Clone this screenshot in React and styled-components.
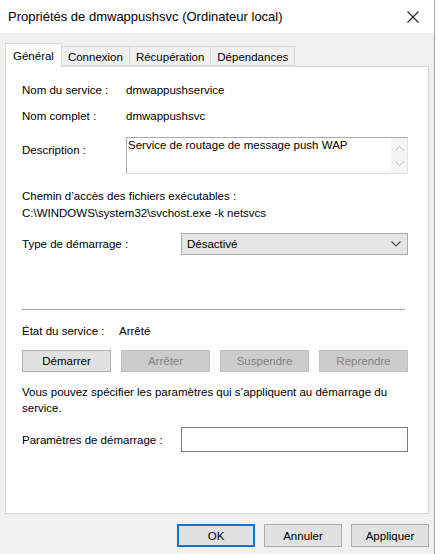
import React from 'react'
import styled, { createGlobalStyle } from 'styled-components'

const GlobalStyle = createGlobalStyle`
  html, body {
    margin: 0;
    padding: 0;
    background: #fff;
  }
  body {
    font-family: "Liberation Sans", Arial, sans-serif;
    font-size: 11.5px;
    color: #000;
  }
`

const tabs = ['Général', 'Connexion', 'Récupération', 'Dépendances']
const actions = [
  { label: 'Démarrer', enabled: true },
  { label: 'Arrêter', enabled: false },
  { label: 'Suspendre', enabled: false },
  { label: 'Reprendre', enabled: false },
]

const App = () => {
  return (
    <>
      <GlobalStyle />
      <Window>
        <TitleBar>
          <Title>Propriétés de dmwappushsvc (Ordinateur local)</Title>
          <CloseButton>
            <svg width="12" height="12" viewBox="0 0 12 12">
              <path d="M0.5 0.5 L11.5 11.5 M11.5 0.5 L0.5 11.5" stroke="#222" strokeWidth="1.1" fill="none" />
            </svg>
          </CloseButton>
        </TitleBar>
        <Body>
          <TabStrip>
            {tabs.map((t, i) => (
              <Tab key={t} active={i === 0}>{t}</Tab>
            ))}
          </TabStrip>
          <Panel>
            <InfoRow top={15}>
              <Label>Nom du service :</Label>
              <Value>dmwappushservice</Value>
            </InfoRow>
            <InfoRow top={10}>
              <Label>Nom complet :</Label>
              <Value>dmwappushsvc</Value>
            </InfoRow>
            <DescRow>
              <Label>Description :</Label>
              <DescBox>
                <DescText>Service de routage de message push WAP</DescText>
                <ScrollTrack>
                  <svg width="9" height="5" viewBox="0 0 9 5">
                    <path d="M0.5 4.5 L4.5 0.5 L8.5 4.5" stroke="#c2c2c2" strokeWidth="1" fill="none" />
                  </svg>
                  <svg width="9" height="5" viewBox="0 0 9 5">
                    <path d="M0.5 0.5 L4.5 4.5 L8.5 0.5" stroke="#c2c2c2" strokeWidth="1" fill="none" />
                  </svg>
                </ScrollTrack>
              </DescBox>
            </DescRow>
            <PathBlock>
              <div>Chemin d’accès des fichiers exécutables :</div>
              <div>C:\WINDOWS\system32\svchost.exe -k netsvcs</div>
            </PathBlock>
            <FieldRow top={11}>
              <FieldLabel>Type de démarrage :</FieldLabel>
              <Select>
                <span>Désactivé</span>
                <svg width="10" height="6" viewBox="0 0 10 6">
                  <path d="M0.5 0.5 L5 5 L9.5 0.5" stroke="#444" strokeWidth="1.1" fill="none" />
                </svg>
              </Select>
            </FieldRow>
            <Separator />
            <InfoRow top={12}>
              <StateLabel>État du service :</StateLabel>
              <span>Arrêté</span>
            </InfoRow>
            <ActionGrid>
              {actions.map(a => (
                <ActionButton key={a.label} disabled={!a.enabled}>{a.label}</ActionButton>
              ))}
            </ActionGrid>
            <Note>
              Vous pouvez spécifier les paramètres qui s’appliquent au démarrage du<br />service.
            </Note>
            <FieldRow top={11}>
              <FieldLabel>Paramètres de démarrage :</FieldLabel>
              <TextInput />
            </FieldRow>
          </Panel>
          <Footer>
            <DialogButton primary>OK</DialogButton>
            <DialogButton>Annuler</DialogButton>
            <DialogButton>Appliquer</DialogButton>
          </Footer>
        </Body>
      </Window>
    </>
  )
}

export default App

const Window = styled.div`
  width: 434px;
  height: 554px;
  border-right: 1px solid #a9a9a9;
  background: #f0f0f0;
  display: flex;
  flex-direction: column;
  overflow: hidden;
`

const TitleBar = styled.div`
  height: 33px;
  background: #fff;
  display: flex;
  align-items: center;
  justify-content: space-between;
  padding: 0 8px;
  flex-shrink: 0;
`

const Title = styled.div`
  font-size: 13px;
  color: #000;
`

const CloseButton = styled.div`
  width: 12px;
  height: 12px;
  margin-right: 7px;
  display: flex;
`

const Body = styled.div`
  flex: 1;
  padding: 9px 5px 0 5px;
  display: flex;
  flex-direction: column;
`

const TabStrip = styled.div`
  display: flex;
  align-items: flex-end;
  height: 24px;
  position: relative;
  z-index: 1;
`

const Tab = styled.div`
  box-sizing: border-box;
  height: ${p => (p.active ? '24px' : '20px')};
  padding: 0 ${p => (p.active ? '7px' : '6px')};
  margin-bottom: ${p => (p.active ? '-1px' : '0')};
  border: 1px solid #d9d9d9;
  border-bottom: ${p => (p.active ? 'none' : '1px solid #d9d9d9')};
  border-left: ${p => (p.active ? '1px solid #d9d9d9' : 'none')};
  background: ${p => (p.active ? '#fff' : '#f0f0f0')};
  display: flex;
  align-items: center;
  padding-top: ${p => (p.active ? '0' : '1px')};
  line-height: 16px;
  white-space: nowrap;
`

const Panel = styled.div`
  box-sizing: border-box;
  width: 424px;
  height: 448px;
  background: #fff;
  border: 1px solid #d9d9d9;
  padding: 0 20px 0 16px;
  display: flex;
  flex-direction: column;
`

const InfoRow = styled.div`
  display: flex;
  line-height: 16px;
  margin-top: ${p => p.top}px;
`

const Label = styled.div`
  width: 104px;
  flex-shrink: 0;
`

const StateLabel = styled.div`
  width: 97px;
  flex-shrink: 0;
`

const Value = styled.div``

const DescRow = styled.div`
  display: flex;
  align-items: flex-start;
  margin-top: 13px;
  line-height: 16px;

  ${Label} {
    padding-top: 5px;
  }
`

const DescBox = styled.div`
  box-sizing: border-box;
  flex: 1;
  height: 37px;
  border: 1px solid #ababab;
  border-right-color: #e3e3e3;
  border-bottom-color: #e3e3e3;
  display: flex;
`

const DescText = styled.div`
  flex: 1;
  padding: 0 0 0 1px;
  line-height: 15px;
`

const ScrollTrack = styled.div`
  width: 16px;
  background: #f4f4f4;
  display: flex;
  flex-direction: column;
  align-items: center;
  justify-content: space-between;
  padding: 8px 0 7px;
`

const PathBlock = styled.div`
  margin-top: 14px;
  line-height: 17px;
`

const FieldRow = styled.div`
  display: flex;
  align-items: center;
  margin-top: ${p => p.top}px;
`

const FieldLabel = styled.div`
  width: 159px;
  flex-shrink: 0;
`

const Select = styled.div`
  box-sizing: border-box;
  width: 228px;
  height: 22px;
  background: #e5e5e5;
  border: 1px solid #acacac;
  display: flex;
  align-items: center;
  justify-content: space-between;
  padding: 0 6px 0 5px;
`

const Separator = styled.div`
  height: 1px;
  width: 383px;
  background: #a0a0a0;
  border-bottom: 1px solid #fff;
  margin-top: 54px;
`

const ActionGrid = styled.div`
  display: grid;
  grid-template-columns: repeat(4, 89px);
  column-gap: 10px;
  margin-top: 11px;
`

const ActionButton = styled.div`
  box-sizing: border-box;
  height: 22px;
  display: flex;
  align-items: center;
  justify-content: center;
  border: 1px solid ${p => (p.disabled ? '#bfbfbf' : '#adadad')};
  background: ${p => (p.disabled ? '#cccccc' : '#e1e1e1')};
  color: ${p => (p.disabled ? '#838383' : '#000')};
`

const Note = styled.div`
  margin-top: 12px;
  line-height: 16px;
`

const TextInput = styled.div`
  box-sizing: border-box;
  width: 228px;
  height: 25px;
  background: #fff;
  border: 1px solid #7a7a7a;
`

const Footer = styled.div`
  display: flex;
  justify-content: flex-end;
  gap: 9px;
  margin-top: 10px;
  width: 424px;
`

const DialogButton = styled.div`
  box-sizing: border-box;
  width: 78px;
  height: 23px;
  display: flex;
  align-items: center;
  justify-content: center;
  background: #e1e1e1;
  border: ${p => (p.primary ? '2px solid #0078d7' : '1px solid #adadad')};
`
